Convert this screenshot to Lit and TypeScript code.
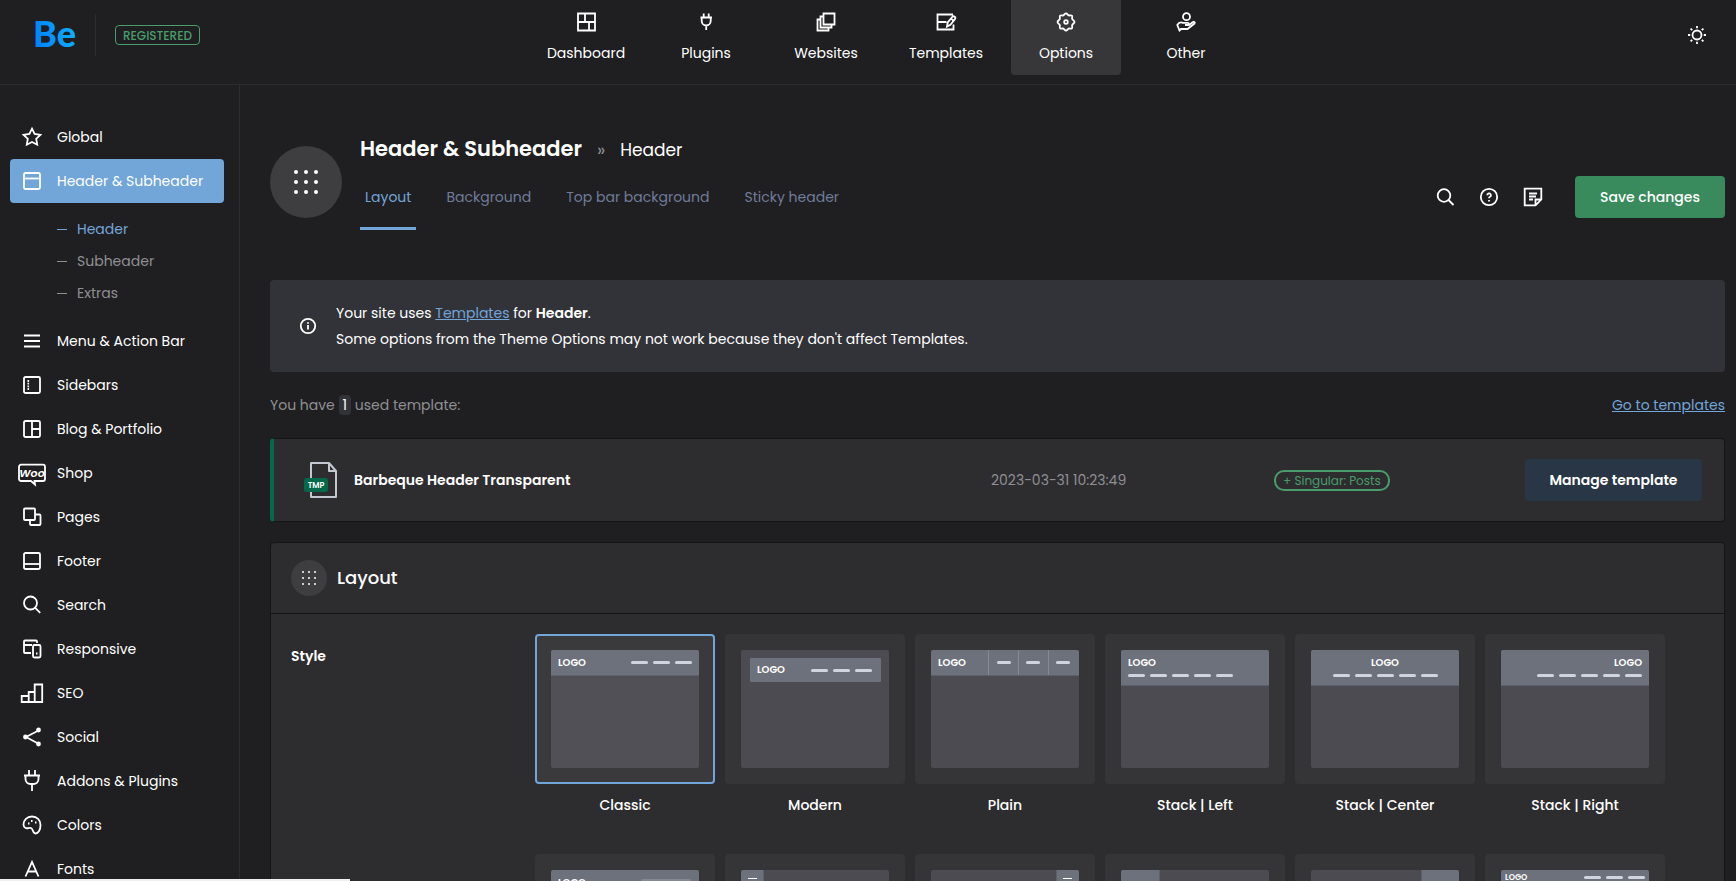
import { LitElement, html, svg, css, nothing } from "lit";
import { customElement, state } from "lit/decorators.js";
import { classMap } from "lit/directives/class-map.js";

/* Icons of the top bar, drawn on a 24 unit grid. */
const topIcons: Record<string, unknown> = {
  dashboard: svg`<path d="M4 3.500h17v17H4zM4 12h17M11 3.500V12M15 12v8.500"/>`,
  plugins: svg`<path d="M9.700 3.500v4M14.700 3.500v4M6.500 7.500h11.500M7.700 7.500V11a4.500 4.500 0 0 0 9 0V7.500M12.200 15.500V20"/>`,
  websites: svg`<path d="M9.500 3.500h11v11h-11zM9.500 6.500h-3v11h11v-3M6.500 9.500h-3v11h11v-3"/>`,
  templates: svg`<path d="M19 4.500H3.500v15h16v-5M3.500 12h9M13 16.500l.7-4 4.500-5.500a1.700 1.700 0 0 1 2.700 2.200l-4.500 5.500zM17 8.500l2.700 2.200"/>`,
  options: svg`<path d="M12 3.300c1.200 0 1.600 1.700 2.600 2.100s2.500-.5 3.300.3-.1 2.300.3 3.300 2.300 1.700 2.300 3-1.900 1.900-2.300 3 .5 2.500-.3 3.300-2.300-.1-3.300.3-1.400 2.100-2.600 2.100-1.600-1.700-2.600-2.100-2.500.5-3.300-.3.100-2.300-.3-3.300-2.300-1.700-2.300-3 1.900-1.900 2.300-3-.5-2.500.3-3.300 2.300.1 3.300-.3S10.800 3.300 12 3.300z"/><circle cx="12" cy="12" r="1.800"/>`,
  other: svg`<circle cx="12.500" cy="6.700" r="3.500"/><path d="M5.500 20.500L7 19h6.500l7-5.500c.8-1-.4-2.200-1.500-1.500l-4 3h-4 2.700c1.500 0 1.500-2.200 0-2.200H9c-2.500-1-4.500 0-5.700 2.200z"/>`,
  sun: svg`<circle cx="12" cy="12" r="4.500"/><path d="M12 3v2.200M12 18.800V21M3 12h2.200M18.800 12H21M5.600 5.600l1.600 1.600M16.800 16.800l1.600 1.600M5.600 18.400l1.600-1.600M16.800 7.200l1.600-1.600"/>`,
  search: svg`<circle cx="11" cy="10.500" r="6.300"/><path d="M15.500 15l5 5"/>`,
  help: svg`<circle cx="12" cy="12" r="8.200"/><path d="M10.300 10.300a1.800 1.800 0 1 1 2.700 1.500c-.7.400-1 .8-1 1.500"/><path d="M12 15v1.500"/>`,
  note: svg`<path d="M20.300 14.500V3.700H3.700v16.600h10.800zM14.500 20.300v-5.800h5.800M8 8.500h8M8 11.500h7M8 14.500h4"/>`,
  info: svg`<circle cx="12" cy="12" r="7.200"/><path d="M12 11v4.500M12 8.200v1.500"/>`,
};

/* Icons of the side menu, drawn on a 28 unit grid. */
const box = svg`<rect x="6" y="6" width="16" height="16" rx="1.500"/>`;
const sideIcons: Record<string, unknown> = {
  global: svg`<path d="M14 5.700l2.600 5.300 5.800.8-4.200 4.100 1 5.800-5.200-2.700-5.200 2.700 1-5.800-4.200-4.100 5.800-.8z"/>`,
  header: svg`${box}<path d="M6 11.500h16"/>`,
  menu: svg`<path d="M6 8.500h16M6 14h16M6 19.500h16"/>`,
  sidebars: svg`${box}<path d="M9.500 10h1.600M9.500 12.700h1.600M9.500 15.300h1.600M9.500 18h1.600"/>`,
  blog: svg`${box}<path d="M14 6v16M14 14h8"/>`,
  shop: svg`<path d="M3 5.700h22a2 2 0 0 1 2 2V20a2 2 0 0 1-2 2h-8.500l.5 3.500-4-3.500H3a2 2 0 0 1-2-2V7.700a2 2 0 0 1 2-2z"/><text class="woo" x="14" y="17.500" text-anchor="middle">Woo</text>`,
  pages: svg`<rect x="6" y="5.500" width="11" height="11.500" rx="1"/><path d="M17 11.500h4.500a1 1 0 0 1 1 1V21a1 1 0 0 1-1 1H13a1 1 0 0 1-1-1v-4"/>`,
  footer: svg`${box}<path d="M6 17h16"/>`,
  search: svg`<circle cx="12.500" cy="12" r="6.500"/><path d="M17.200 16.800l5 5"/>`,
  responsive: svg`<path d="M13 18H7a1 1 0 0 1-1-1V6.500a1 1 0 0 1 1-1h11a1 1 0 0 1 1 1V8M6 10h8"/><rect x="15" y="10" width="7.500" height="12.500" rx="1.500"/><path d="M18 18.500h1.500"/>`,
  seo: svg`<path d="M3.700 23v-6h7v6zM10.700 23V13h6v10zM16.700 23V5.500h7.500V23z"/>`,
  social: svg`<path d="M8 14l13-6.700M8 14l13 7"/><g class="solid"><circle cx="7.500" cy="14" r="1.500"/><circle cx="20.500" cy="7" r="1.500"/><circle cx="20.500" cy="21" r="1.500"/></g>`,
  addons: svg`<path d="M11 3v5M17 3v5M6 8.500h16M7.500 8.500V12a5 5 0 0 0 5 5h3a5 5 0 0 0 5-5V8.500M14 17v7"/>`,
  colors: svg`<path d="M14 5.500c5 0 8.500 3.500 8.500 8.500 0 5.500-2.500 8.500-5 8.500-3 0-2-4.500-4.500-5.500-2-.8-3.500 1-5.500 0-1.300-.6-2-2-2-3.500C5.500 9 9 5.500 14 5.500z"/><path d="M10 12.500h1.500M13 10h1.500M17 11.500h1.500"/>`,
  fonts: svg`<path d="M7.500 21.500L14 7l6.500 14.500M9.500 16.500h9"/>`,
};

const dashes = (xs: number[], y: number, w = 17) =>
  xs.map((x) => svg`<rect class="dash" x=${x} y=${y} width=${w} height="3" rx="1.500"/>`);
const logo = (x: number, y: number, anchor = "start", small = false) =>
  svg`<text class=${small ? "logo small" : "logo"} x=${x} y=${y} text-anchor=${anchor}>LOGO</text>`;
const bar = (h: number) => svg`<rect class="bar" width="148" height=${h}/><rect class="edge" y=${h} width="148" height="1"/>`;

const styleChoices: { name: string; art: unknown }[] = [
  { name: "Classic", art: svg`${bar(25)}${logo(7, 16)}${dashes([80, 102, 124], 11)}` },
  {
    name: "Modern",
    art: svg`<rect class="bar" x="9" y="8" width="131" height="24" rx="1"/>${logo(16, 23)}${dashes([70, 92, 114], 19)}`,
  },
  {
    name: "Plain",
    art: svg`${bar(25)}${[57, 87, 117].map((x) => svg`<rect class="divider" x=${x} width="1" height="25"/>`)}${logo(7, 16)}${dashes([66, 95, 125], 11, 14)}`,
  },
  { name: "Stack | Left", art: svg`${bar(35)}${logo(7, 16)}${dashes([7, 29, 51, 73, 95], 24)}` },
  { name: "Stack | Center", art: svg`${bar(35)}${logo(74, 16, "middle")}${dashes([22, 44, 66, 88, 110], 24)}` },
  { name: "Stack | Right", art: svg`${bar(35)}${logo(141, 16, "end")}${dashes([36, 58, 80, 102, 124], 24)}` },
  {
    name: "Shop",
    art: svg`${bar(25)}${logo(7, 16)}<rect class="field" x="90" y="9" width="50" height="8" rx="2"/>`,
  },
  {
    name: "Creative",
    art: svg`<rect class="bar" width="22" height="118"/><rect class="edge" x="22" width="1" height="118"/><rect class="stroke" x="7" y="8" width="9" height="1"/>`,
  },
  {
    name: "Creative | Right",
    art: svg`<rect class="bar" x="126" width="22" height="118"/><rect class="edge" x="125" width="1" height="118"/><rect class="stroke" x="132" y="8" width="9" height="1"/>`,
  },
  {
    name: "Creative | Always Open",
    art: svg`<rect class="bar" width="38" height="118"/><rect class="edge" x="38" width="1" height="118"/>`,
  },
  {
    name: "Creative | Always Open Right",
    art: svg`<rect class="bar" x="111" width="37" height="118"/><rect class="edge" x="110" width="1" height="118"/>`,
  },
  { name: "Fixed", art: svg`${bar(16)}${logo(4, 10, "start", true)}${dashes([83, 105, 127], 6)}` },
];

const topNav = [
  ["dashboard", "Dashboard"],
  ["plugins", "Plugins"],
  ["websites", "Websites"],
  ["templates", "Templates"],
  ["options", "Options"],
  ["other", "Other"],
];

const sideNav: { icon: string; label: string; children?: string[] }[] = [
  { icon: "global", label: "Global" },
  { icon: "header", label: "Header & Subheader", children: ["Header", "Subheader", "Extras"] },
  { icon: "menu", label: "Menu & Action Bar" },
  { icon: "sidebars", label: "Sidebars" },
  { icon: "blog", label: "Blog & Portfolio" },
  { icon: "shop", label: "Shop" },
  { icon: "pages", label: "Pages" },
  { icon: "footer", label: "Footer" },
  { icon: "search", label: "Search" },
  { icon: "responsive", label: "Responsive" },
  { icon: "seo", label: "SEO" },
  { icon: "social", label: "Social" },
  { icon: "addons", label: "Addons & Plugins" },
  { icon: "colors", label: "Colors" },
  { icon: "fonts", label: "Fonts" },
];

const icon = (name: string) =>
  html`<svg class="icon" width="24" height="24" viewBox="0 0 24 24" aria-hidden="true">${topIcons[name]}</svg>`;

const grip = (cls: string, r: number, step: number) => html`
  <span class=${cls}>
    <svg width="30" height="30" viewBox="-15 -15 30 30" aria-hidden="true">
      ${[-1, 0, 1].flatMap((y) => [-1, 0, 1].map((x) => svg`<circle class="dot" cx=${x * step} cy=${y * step} r=${r}/>`))}
    </svg>
  </span>
`;

@customElement("app-root")
export class AppRoot extends LitElement {
  @state() private chosen = "Classic";
  @state() private tab = "Layout";

  static styles = css`
    :host {
      --page: #1f1f21;
      --panel: #2d2d2f;
      --line: #2c2c2e;
      --edge: #151517;
      --accent: #72a5d8;
      --green: #4a9c6d;
      display: flex;
      flex-direction: column;
      height: 100vh;
      overflow: hidden;
      background: var(--page);
      color: #fff;
      font: 400 14px/20px Poppins, Inter, "Open Sans", sans-serif;
    }
    *, *::before { box-sizing: border-box; }
    a { color: inherit; text-decoration: none; }
    button { font: inherit; color: inherit; border: 0; background: none; padding: 0; cursor: pointer; }
    ul, h1, h2, p { margin: 0; padding: 0; list-style: none; }
    .icon { display: block; fill: none; stroke: currentColor; stroke-width: 1.8; flex: none; }
    .solid { fill: currentColor; }

    .top {
      display: grid;
      grid-template-columns: 1fr auto 1fr;
      flex: none;
      height: 85px;
      padding-left: 36px;
      border-bottom: 1px solid var(--line);
    }
    .brand { display: flex; align-items: center; gap: 19px; height: 70px; }
    .be { display: block; overflow: visible; }
    .be-text { font: 900 36px Lato, Inter, sans-serif; fill: url(#be-fill); }
    .rule { width: 1px; height: 42px; background: var(--line); }
    .registered {
      height: 20px;
      padding: 0 7px;
      border: 1px solid var(--green);
      border-radius: 4px;
      color: var(--green);
      font-size: 12px;
      font-weight: 500;
      line-height: 20px;
    }
    .nav { display: flex; gap: 10px; height: 75px; }
    .nav-link {
      display: flex;
      flex-direction: column;
      align-items: center;
      gap: 9px;
      width: 110px;
      padding-top: 10px;
      border-radius: 0 0 4px 4px;
    }
    .nav-link.on { background: #373739; }
    .theme { justify-self: end; align-self: start; margin: 23px 27px 0 0; }

    .body { display: flex; flex: 1; min-height: 0; }
    .side {
      flex: none;
      width: 240px;
      padding: 30px 15px 0 10px;
      border-right: 1px solid var(--line);
      overflow: hidden;
    }
    .side-link {
      display: flex;
      align-items: center;
      gap: 11px;
      height: 44px;
      padding-left: 8px;
      border-radius: 4px;
      white-space: nowrap;
    }
    .side-link.on { background: var(--accent); }
    .woo { font: italic 600 11px Poppins, Inter, sans-serif; fill: currentColor; stroke: none; }
    .sub { padding: 10px 0 10px 47px; color: #8f8f93; }
    .sub-link { display: flex; align-items: center; gap: 10px; height: 32px; }
    .sub-link::before { content: ""; width: 10px; height: 1px; background: currentColor; }
    .sub-link.on { color: var(--accent); }

    .main { flex: 1; min-width: 0; padding: 49px 11px 0 30px; overflow: hidden; }
    .head { display: flex; align-items: center; margin-bottom: 50px; }
    .grip {
      display: grid;
      place-items: center;
      flex: none;
      width: 72px;
      height: 72px;
      margin: 12px 18px 12px 0;
      border-radius: 50%;
      background: #3e3e40;
    }
    .grip.small { width: 36px; height: 36px; margin: 0 10px 0 0; }
    .dot { fill: #fff; }
    .titles { flex: 1; min-width: 0; }
    .crumbs { display: flex; align-items: baseline; gap: 15px; height: 30px; }
    .title { font-size: 21px; font-weight: 600; line-height: 30px; }
    .chevrons { color: #8f8f93; font-size: 18px; }
    .crumb { font-size: 17px; }
    .tabs { display: flex; gap: 25px; height: 66px; }
    .tab { padding: 3px 5px 0; border-bottom: 3px solid transparent; color: #6f7c99; }
    .tab.on { color: var(--accent); border-color: var(--accent); }
    .tools { display: flex; align-items: center; gap: 20px; margin-top: 30px; }
    .btn { height: 42px; border-radius: 4px; font-weight: 600; font-size: 14px; }
    .save { width: 150px; margin-left: 10px; background: #398b5d; font-weight: 500; }
    .manage { background: #283645; width: 100%; }

    .notice {
      display: flex;
      align-items: center;
      gap: 16px;
      padding: 20px 26px;
      border-radius: 4px;
      background: #323338;
      line-height: 26px;
    }
    .link { color: var(--accent); text-decoration: underline; }
    .strong { font-weight: 600; }
    .usage { display: flex; justify-content: space-between; padding: 23px 0; color: #8f8f93; }
    .count { padding: 0 4px; border-radius: 4px; background: #323338; color: #fff; }
    .template {
      display: grid;
      grid-template-columns: 687fr 283fr 251fr 177px;
      align-items: center;
      height: 84px;
      padding: 0 22px 0 30px;
      border: 1px solid var(--edge);
      border-left: 4px solid #03694a;
      border-radius: 4px;
      background: var(--panel);
    }
    .template-name { display: flex; align-items: center; gap: 16px; font-weight: 600; }
    .file { fill: none; stroke: #c3c7d0; stroke-width: 2; stroke-linejoin: round; }
    .tmp { fill: #03694a; stroke: none; }
    .tmp-text { font: 600 8px Poppins, Inter, sans-serif; fill: #fff; stroke: none; }
    .date { color: #8f8f93; }
    .pill {
      justify-self: start;
      height: 21px;
      padding: 0 7px;
      border: 2px solid var(--green);
      border-radius: 10px;
      color: var(--green);
      font-size: 12px;
      line-height: 18px;
    }

    .panel { margin-top: 20px; border: 1px solid var(--edge); border-radius: 4px; background: var(--panel); }
    .panel-head { display: flex; align-items: center; height: 71px; padding: 0 20px; border-bottom: 1px solid var(--edge); }
    .panel-title { font-size: 18px; font-weight: 500; line-height: 24px; }
    .row { display: flex; align-items: start; margin: 0; padding: 20px; border: 0; }
    .row-label { flex: none; width: 244px; margin-top: 12px; font-weight: 600; }
    .choices { display: flex; flex-wrap: wrap; gap: 10px; flex: 1; }
    .choice { width: 180px; height: 210px; text-align: center; font-weight: 500; cursor: pointer; }
    .radio { position: absolute; opacity: 0; margin: 0; }
    .card {
      display: grid;
      place-items: center;
      height: 150px;
      margin-bottom: 11px;
      border: 2px solid transparent;
      border-radius: 4px;
      background: #353537;
      background-clip: border-box;
    }
    .radio:checked + .card { border-color: var(--accent); background: #3a3a3c; }
    .radio:checked + .card .thumb { background: #515056; }
    .thumb { display: block; width: 148px; height: 118px; border-radius: 2px; background: #4c4b51; }
    .bar { fill: #6d717b; }
    .edge { fill: #5d616c; }
    .divider { fill: #858994; }
    .dash { fill: #d0d4de; }
    .field { fill: #858994; }
    .stroke { fill: #fff; }
    .logo { font: 600 10px Poppins, Inter, sans-serif; fill: #fff; }
    .logo.small { font-size: 8px; }
    .status { position: fixed; left: 0; bottom: 0; width: 350px; height: 2px; background: #f0f0f2; }
  `;

  private renderSide() {
    return html`
      <nav class="side" aria-label="Theme options">
        ${sideNav.map(
          (item) => html`
            <a class=${classMap({ "side-link": true, on: !!item.children })} href="#${item.icon}">
              <svg class="icon" width="28" height="28" viewBox="0 0 28 28" aria-hidden="true">${sideIcons[item.icon]}</svg>
              ${item.label}
            </a>
            ${item.children
              ? html`<div class="sub">
                  ${item.children.map(
                    (name, i) => html`<a class=${classMap({ "sub-link": true, on: i === 0 })} href="#${name.toLowerCase()}">${name}</a>`
                  )}
                </div>`
              : nothing}
          `
        )}
      </nav>
    `;
  }

  private renderHead() {
    return html`
      <div class="head">
        ${grip("grip", 2, 10)}
        <div class="titles">
          <div class="crumbs">
            <h1 class="title">Header &amp; Subheader</h1>
            <span class="chevrons">»</span>
            <span class="crumb">Header</span>
          </div>
          <div class="tabs" role="tablist">
            ${["Layout", "Background", "Top bar background", "Sticky header"].map(
              (name) => html`<button
                class=${classMap({ tab: true, on: this.tab === name })}
                role="tab"
                aria-selected=${this.tab === name}
                @click=${() => (this.tab = name)}
              >${name}</button>`
            )}
          </div>
        </div>
        <div class="tools">
          <button aria-label="Search">${icon("search")}</button>
          <button aria-label="Help">${icon("help")}</button>
          <button aria-label="Notes">${icon("note")}</button>
          <button class="btn save">Save changes</button>
        </div>
      </div>
    `;
  }

  private renderTemplate() {
    return html`
      <div class="template">
        <div class="template-name">
          <svg class="file" width="34" height="38" viewBox="0 0 34 38" aria-hidden="true">
            <path d="M7 2h18l7 8v26H7zM25 2v8h7" />
            <rect class="tmp" x="0" y="17" width="24" height="14" rx="3" />
            <text class="tmp-text" x="12" y="27" text-anchor="middle">TMP</text>
          </svg>
          Barbeque Header Transparent
        </div>
        <time class="date">2023-03-31 10:23:49</time>
        <span class="pill">+ Singular: Posts</span>
        <button class="btn manage">Manage template</button>
      </div>
    `;
  }

  render() {
    return html`
      <header class="top">
        <div class="brand">
          <svg class="be" width="40" height="42" viewBox="0 0 40 42" role="img" aria-label="Be">
            <defs>
              <linearGradient id="be-fill" x1="0" y1="0.6" x2="1" y2="0.4">
                <stop offset="0" stop-color="#0080ff" />
                <stop offset="1" stop-color="#0fb0ff" />
              </linearGradient>
            </defs>
            <text class="be-text" x="-3" y="33">Be</text>
          </svg>
          <span class="rule"></span>
          <span class="registered">REGISTERED</span>
        </div>
        <nav class="nav" aria-label="Main">
          ${topNav.map(
            ([id, label]) => html`<a class=${classMap({ "nav-link": true, on: id === "options" })} href="#${id}">${icon(id)}${label}</a>`
          )}
        </nav>
        <button class="theme" aria-label="Switch colour theme">${icon("sun")}</button>
      </header>
      <div class="body">
        ${this.renderSide()}
        <main class="main">
          ${this.renderHead()}
          <div class="notice">
            ${icon("info")}
            <p>
              Your site uses <a class="link" href="#templates">Templates</a> for <b class="strong">Header</b>.<br />
              Some options from the Theme Options may not work because they don't affect Templates.
            </p>
          </div>
          <div class="usage">
            <p>You have <span class="count">1</span> used template:</p>
            <a class="link" href="#templates">Go to templates</a>
          </div>
          ${this.renderTemplate()}
          <section class="panel">
            <div class="panel-head">
              ${grip("grip small", 1, 6)}
              <h2 class="panel-title">Layout</h2>
            </div>
            <div class="row" role="radiogroup" aria-labelledby="style-label">
              <span class="row-label" id="style-label">Style</span>
              <div class="choices">
                ${styleChoices.map(
                  ({ name, art }) => html`
                    <label class="choice">
                      <input
                        class="radio"
                        type="radio"
                        name="style"
                        .value=${name}
                        .checked=${this.chosen === name}
                        @change=${() => (this.chosen = name)}
                      />
                      <span class="card"><svg class="thumb" viewBox="0 0 148 118" aria-hidden="true">${art}</svg></span>
                      ${name}
                    </label>
                  `
                )}
              </div>
            </div>
          </section>
        </main>
      </div>
      <div class="status"></div>
    `;
  }
}
